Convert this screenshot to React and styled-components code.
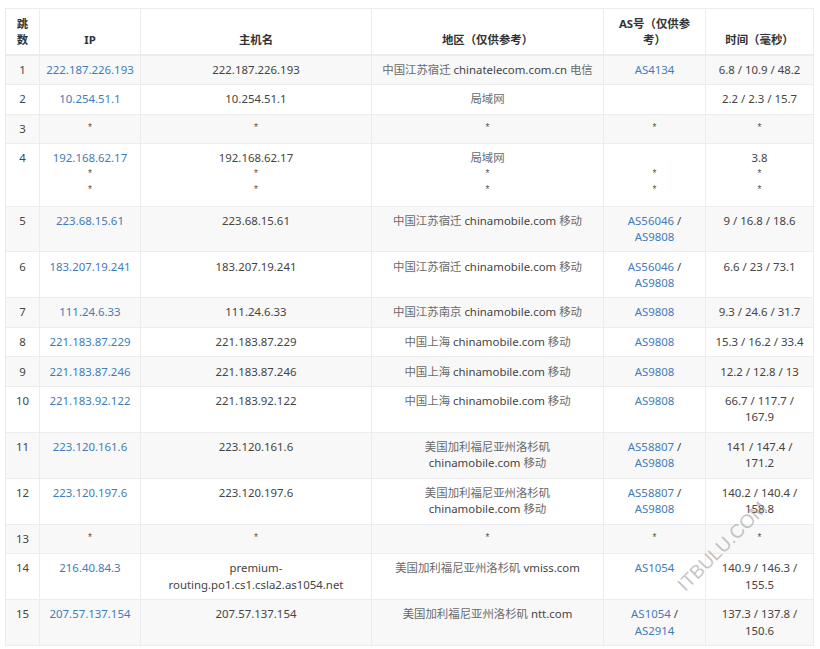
import React from "react";
import styled, { createGlobalStyle } from "styled-components";

const GlobalStyle = createGlobalStyle`
  html, body {
    margin: 0;
    background: #fff;
  }
`;

const Page = styled.div`
  position: relative;
  width: 820px;
  height: 649px;
  overflow: hidden;
  padding: 8px 6px 0 5px;
  box-sizing: border-box;
  font-family: "Noto Sans", "Noto Sans CJK SC", sans-serif;
  font-size: 11.4px;
  line-height: 16.3px;
  color: #444;
`;

const Table = styled.table`
  width: 808px;
  table-layout: fixed;
  border-collapse: collapse;
  text-align: center;
`;

const Th = styled.th`
  border: 1px solid #ececec;
  border-bottom-width: 2px;
  padding: 7px 6px 5px;
  vertical-align: bottom;
  font-weight: 700;
  color: #333;
`;

const Row = styled.tr`
  background: ${(p) => (p.$odd ? "#f8f8f8" : "#fff")};
`;

const Td = styled.td`
  border: 1px solid #ececec;
  padding: 6.15px 5px;
  vertical-align: top;
`;

const Link = styled.a`
  color: #3f7cb8;
  text-decoration: none;
`;

const Star = styled.span`
  position: relative;
  top: -2px;
  font-family: "Liberation Sans", sans-serif;
  font-size: 10px;
  line-height: 0;
  color: #555;
`;

const Cjk = styled.span`
  color: #6a6a6a;
`;

const Watermark = styled.div`
  position: absolute;
  left: 664px;
  top: 534px;
  width: 116px;
  text-align: center;
  transform: rotate(-45deg);
  font-family: "Liberation Sans", sans-serif;
  font-size: 19px;
  line-height: 26px;
  color: rgba(140, 140, 140, 0.5);
  white-space: nowrap;
`;

const widths = [34, 101, 231, 232, 102, 108];

const rows = [
  { ip: ["222.187.226.193"], host: ["222.187.226.193"], area: ["中国江苏宿迁 chinatelecom.com.cn 电信"], as: [["AS4134"]], time: ["6.8 / 10.9 / 48.2"] },
  { ip: ["10.254.51.1"], host: ["10.254.51.1"], area: ["局域网"], as: [], time: ["2.2 / 2.3 / 15.7"] },
  { ip: ["*"], host: ["*"], area: ["*"], as: ["*"], time: ["*"] },
  { ip: ["192.168.62.17", "*", "*"], host: ["192.168.62.17", "*", "*"], area: ["局域网", "*", "*"], as: ["\u00a0", "*", "*"], time: ["3.8", "*", "*"] },
  { ip: ["223.68.15.61"], host: ["223.68.15.61"], area: ["中国江苏宿迁 chinamobile.com 移动"], as: [["AS56046", " /"], ["AS9808"]], time: ["9 / 16.8 / 18.6"] },
  { ip: ["183.207.19.241"], host: ["183.207.19.241"], area: ["中国江苏宿迁 chinamobile.com 移动"], as: [["AS56046", " /"], ["AS9808"]], time: ["6.6 / 23 / 73.1"] },
  { ip: ["111.24.6.33"], host: ["111.24.6.33"], area: ["中国江苏南京 chinamobile.com 移动"], as: [["AS9808"]], time: ["9.3 / 24.6 / 31.7"] },
  { ip: ["221.183.87.229"], host: ["221.183.87.229"], area: ["中国上海 chinamobile.com 移动"], as: [["AS9808"]], time: ["15.3 / 16.2 / 33.4"] },
  { ip: ["221.183.87.246"], host: ["221.183.87.246"], area: ["中国上海 chinamobile.com 移动"], as: [["AS9808"]], time: ["12.2 / 12.8 / 13"] },
  { ip: ["221.183.92.122"], host: ["221.183.92.122"], area: ["中国上海 chinamobile.com 移动"], as: [["AS9808"]], time: ["66.7 / 117.7 /", "167.9"] },
  { ip: ["223.120.161.6"], host: ["223.120.161.6"], area: ["美国加利福尼亚州洛杉矶", "chinamobile.com 移动"], as: [["AS58807", " /"], ["AS9808"]], time: ["141 / 147.4 /", "171.2"] },
  { ip: ["223.120.197.6"], host: ["223.120.197.6"], area: ["美国加利福尼亚州洛杉矶", "chinamobile.com 移动"], as: [["AS58807", " /"], ["AS9808"]], time: ["140.2 / 140.4 /", "158.8"] },
  { ip: ["*"], host: ["*"], area: ["*"], as: ["*"], time: ["*"] },
  { ip: ["216.40.84.3"], host: ["premium-", "routing.po1.cs1.csla2.as1054.net"], area: ["美国加利福尼亚州洛杉矶 vmiss.com"], as: [["AS1054"]], time: ["140.9 / 146.3 /", "155.5"] },
  { ip: ["207.57.137.154"], host: ["207.57.137.154"], area: ["美国加利福尼亚州洛杉矶 ntt.com"], as: [["AS1054", " /"], ["AS2914"]], time: ["137.3 / 137.8 /", "150.6"] },
];

// the Chinese part of a region is drawn lighter than the domain next to it
function regionParts(text) {
  return text.split(/([\u4e00-\u9fff]+)/).map((part, i) =>
    i % 2 === 1 ? <Cjk key={i}>{part}</Cjk> : part
  );
}

function Lines({ items, render }) {
  return items.map((line, i) => (
    <React.Fragment key={i}>
      {i > 0 && <br />}
      {line === "*" ? <Star>*</Star> : render ? render(line) : line}
    </React.Fragment>
  ));
}

const ipLink = (line) => <Link href="#">{line}</Link>;

const asLink = (line) =>
  Array.isArray(line) ? (
    <>
      <Link href="#">{line[0]}</Link>
      {line[1]}
    </>
  ) : (
    line
  );

export default function App() {
  return (
    <Page>
      <GlobalStyle />
      <Table>
        <colgroup>
          {widths.map((w, i) => (
            <col key={i} style={{ width: w }} />
          ))}
        </colgroup>
        <thead>
          <tr>
            <Th>跳<br />数</Th>
            <Th>IP</Th>
            <Th>主机名</Th>
            <Th>地区（仅供参考）</Th>
            <Th>AS号（仅供参<br />考）</Th>
            <Th>时间（毫秒）</Th>
          </tr>
        </thead>
        <tbody>
          {rows.map((r, i) => (
            <Row key={i} $odd={i % 2 === 0}>
              <Td>{i + 1}</Td>
              <Td><Lines items={r.ip} render={ipLink} /></Td>
              <Td><Lines items={r.host} /></Td>
              <Td><Lines items={r.area} render={regionParts} /></Td>
              <Td><Lines items={r.as} render={asLink} /></Td>
              <Td><Lines items={r.time} /></Td>
            </Row>
          ))}
        </tbody>
      </Table>
      <Watermark>ITBULU.COM</Watermark>
    </Page>
  );
}
